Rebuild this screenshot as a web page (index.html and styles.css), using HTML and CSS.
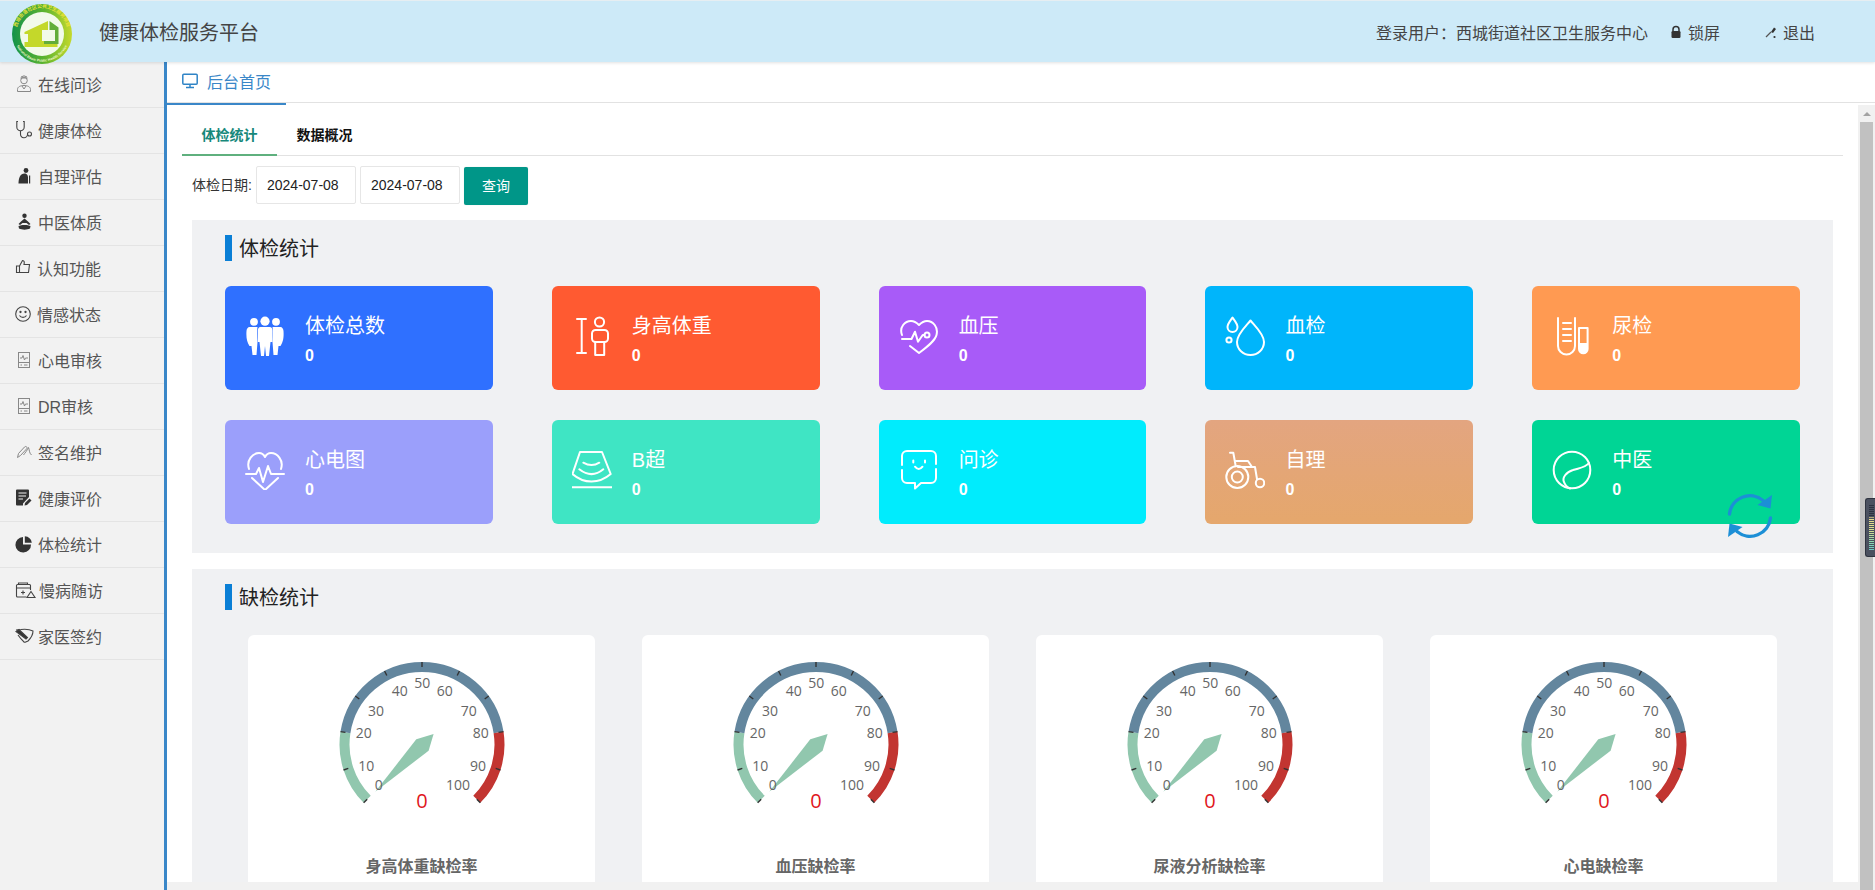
FILE: index.html
```html
<!DOCTYPE html>
<html lang="zh-CN">
<head>
<meta charset="utf-8">
<title>健康体检服务平台</title>
<link rel="stylesheet" href="styles.css">
</head>
<body>
<svg class="defs" width="0" height="0" aria-hidden="true">
  <defs>
    <linearGradient id="ring" x1="0" y1="0" x2="1" y2="0">
      <stop offset="0" stop-color="#12924a"/><stop offset=".55" stop-color="#5fb52e"/><stop offset="1" stop-color="#c5d92c"/>
    </linearGradient>
    <symbol id="dial" viewBox="0 0 240 200">
      <g fill="none" stroke-width="10">
        <path d="M65.2 154.3A77.5 77.5 0 0 1 43.45 87.38" stroke="#91c7ae"/>
        <path d="M43.45 87.38A77.5 77.5 0 0 1 196.55 87.38" stroke="#63869e"/>
        <path d="M196.55 87.38A77.5 77.5 0 0 1 174.8 154.3" stroke="#c23531"/>
      </g>
      <g stroke="#333" stroke-width="1.4">
        <line x1="120" y1="17" x2="120" y2="22" transform="rotate(-135 120 99.5)"/>
        <line x1="120" y1="17" x2="120" y2="22" transform="rotate(-108 120 99.5)"/>
        <line x1="120" y1="17" x2="120" y2="22" transform="rotate(-81 120 99.5)"/>
        <line x1="120" y1="17" x2="120" y2="22" transform="rotate(-54 120 99.5)"/>
        <line x1="120" y1="17" x2="120" y2="22" transform="rotate(-27 120 99.5)"/>
        <line x1="120" y1="17" x2="120" y2="22"/>
        <line x1="120" y1="17" x2="120" y2="22" transform="rotate(27 120 99.5)"/>
        <line x1="120" y1="17" x2="120" y2="22" transform="rotate(54 120 99.5)"/>
        <line x1="120" y1="17" x2="120" y2="22" transform="rotate(81 120 99.5)"/>
        <line x1="120" y1="17" x2="120" y2="22" transform="rotate(108 120 99.5)"/>
        <line x1="120" y1="17" x2="120" y2="22" transform="rotate(135 120 99.5)"/>
      </g>
      <polygon points="73.3,146.7 114.3,94.3 131.6,89 126.6,105.7" fill="#91c7ae"/>
    </symbol>
  </defs>
</svg>

<div class="app">
  <header class="topbar">
    <div class="brand">
      <svg class="logo" width="62" height="62" viewBox="0 0 62 62">
        <defs><path id="logo-top" d="M5.4 26.5A26 26 0 0 1 56.6 26.5"/><path id="logo-bot" d="M3.5 36A28 28 0 0 0 58.5 36"/></defs>
        <circle cx="31" cy="31" r="30" fill="url(#ring)"/>
        <circle cx="31" cy="31" r="22" fill="#f2fae9"/>
        <path d="M13.5 29 L37 18 V27 H31 V38 H46.5 V44 H13.5 V39 H17 V31 H13.5Z" fill="#c4d82a"/>
        <path d="M38.5 18 L47.5 24.5 V41 H33 V38 H44 V27 H38.5Z" fill="#62ad3a"/>
        <text class="logo-top"><textPath href="#logo-top" startOffset="50%" text-anchor="middle">西城街道社区公共卫生服务项目</textPath></text>
        <text class="logo-bot"><textPath href="#logo-bot" startOffset="50%" text-anchor="middle">National Basic Public Health Service</textPath></text>
      </svg>
      <span class="brand-name">健康体检服务平台</span>
    </div>
    <div class="top-actions">
      <span class="user">登录用户：西城街道社区卫生服务中心</span>
      <span class="action action-lock">
        <svg width="12" height="14" viewBox="0 0 12 14"><path d="M3 6V4.5a3 3 0 0 1 6 0V6" fill="none" stroke="#333" stroke-width="1.5"/><rect x="1.5" y="6" width="9" height="7" rx="1.2" fill="#333"/></svg>
        锁屏
      </span>
      <span class="action action-exit">
        <svg width="14" height="14" viewBox="0 0 14 14"><path d="M2 12 L7 7" stroke="#555" stroke-width="1.2"/><path d="M7 7 L10 2.5 L12 4 L9 8Z" fill="#333"/><circle cx="10.5" cy="12" r="1.1" fill="#333"/></svg>
        退出
      </span>
    </div>
  </header>

  <div class="shell">
    <nav class="sidebar">
      <a class="nav-item"><svg class="nav-icon stroke-gray" viewBox="0 0 20 20"><circle cx="9" cy="6.5" r="3.3"/><path d="M5.5 4 H12.5 M6 3 L9 1.8 L12 3"/><path d="M2.5 17.5 V15.5 C2.5 12.5 6 11.5 9 11.5 S15.5 12.5 15.5 15.5 V17.5Z"/><path d="M7 12 L9 15 L11 12"/></svg><span>在线问诊</span></a>
      <a class="nav-item"><svg class="nav-icon stroke-dark" viewBox="0 0 20 20"><path d="M3 1.5 H1.8 V7 A3.7 3.7 0 0 0 9.2 7 V1.5 H8"/><path d="M5.5 11 V14 A3.5 3.5 0 0 0 12.5 14.5"/><circle cx="14.5" cy="14" r="2"/></svg><span>健康体检</span></a>
      <a class="nav-item"><svg class="nav-icon fill-dark" viewBox="0 0 20 20"><circle cx="11" cy="4.5" r="2.4"/><path d="M3.5 17.5 C3.5 11.5 5.5 7.5 9.5 7.5 C12.5 7.5 13 10 13 12 V17.5Z"/><rect x="14" y="9.5" width="1.2" height="8"/></svg><span>自理评估</span></a>
      <a class="nav-item"><svg class="nav-icon fill-dark" viewBox="0 0 20 20"><circle cx="9.5" cy="3.8" r="2.2"/><path d="M9.5 6.5 L13 9.5 L15.5 12 L14 13 L11.5 11 H7.5 L5 13 L3.5 12 L6 9.5Z"/><path d="M3.5 14 C6 12.5 13 12.5 15.5 14 L15 16.5 C12 18 7 18 4 16.5Z"/></svg><span>中医体质</span></a>
      <a class="nav-item nav-tight"><svg class="nav-icon stroke-dark" viewBox="0 0 20 20"><path d="M1.5 8 H4.5 V14.5 H1.5Z"/><path d="M4.5 8 L7.5 2.5 C9.5 2.5 9.5 4.5 9 6.5 H14.5 L13.5 14.5 H4.5"/></svg><span>认知功能</span></a>
      <a class="nav-item nav-mid"><svg class="nav-icon stroke-dark" viewBox="0 0 20 20"><circle cx="8" cy="10" r="7.3"/><circle cx="5.5" cy="8" r=".6"/><circle cx="10.5" cy="8" r=".6"/><path d="M4.5 11.5 C6 14 10 14 11.5 11.5"/></svg><span>情感状态</span></a>
      <a class="nav-item"><svg class="nav-icon stroke-gray" viewBox="0 0 20 20"><rect x="3.5" y="2.5" width="11" height="15"/><path d="M3.5 12.5 H14.5 M5 8 H7 L8 5.5 L9.5 10 L10.5 8 H13 M5.5 15 H7 M9 15 H12.5"/></svg><span>心电审核</span></a>
      <a class="nav-item"><svg class="nav-icon stroke-gray" viewBox="0 0 20 20"><rect x="3.5" y="2.5" width="11" height="15"/><path d="M3.5 12.5 H14.5 M5 8 H7 L8 5.5 L9.5 10 L10.5 8 H13 M5.5 15 H7 M9 15 H12.5"/></svg><span>DR审核</span></a>
      <a class="nav-item"><svg class="nav-icon stroke-gray" viewBox="0 0 20 20"><path d="M2.5 15.5 L3.5 11.5 L9.5 5 C11 3.5 13 5.5 11.5 7 L5.5 13.5Z"/><path d="M8.5 13 C10 11 12.5 8 13.5 5.5 C14.5 7.5 14 11 16.5 13"/></svg><span>签名维护</span></a>
      <a class="nav-item"><svg class="nav-icon fill-dark" viewBox="0 0 20 20"><path d="M2 1.5 H13 A1 1 0 0 1 14 2.5 V9 L8 15.5 V17.5 H2 A1 1 0 0 1 1 16.5 V2.5 A1 1 0 0 1 2 1.5Z"/><path d="M3.5 5 H11.5 M3.5 8 H11 M3.5 11 H8" stroke="#f2f2f2" stroke-width="1.2"/><path d="M9.5 17.5 L10 15 L14.5 10.5 L16.5 12.5 L12 17Z"/></svg><span>健康评价</span></a>
      <a class="nav-item"><svg class="nav-icon fill-dark" viewBox="0 0 20 20"><path d="M8 3 V10.5 H16 A7.8 7.8 0 1 1 8 3Z"/><path d="M9.8 2.3 A7.8 7.8 0 0 1 16.8 8.8 H9.8Z"/></svg><span>体检统计</span></a>
      <a class="nav-item nav-wide"><svg class="nav-icon nav-icon-lg stroke-dark" viewBox="0 0 22 20"><path d="M11.5 17 H2.5 A1 1 0 0 1 1.5 16 V5.5 A1 1 0 0 1 2.5 4.5 H14.5 A1 1 0 0 1 15.5 5.5 V10"/><path d="M3.5 4.5 V3 H12.5 V4.5 M1.5 8 H15.5 M8 10.5 V14.5 M6 12.5 H10"/><path d="M16 11.5 L20 17.5 H12Z"/></svg><span>慢病随访</span></a>
      <a class="nav-item"><svg class="nav-icon stroke-dark" viewBox="0 0 20 20"><path d="M1 4 L6 3.5 C10 3 14 3 18 5 C18 9 16 12 13 15 L9.5 16.5"/><path d="M1 5.5 L11 13 L12.5 11.5 L4 3.5Z" fill="#333"/><path d="M3 9 C5 12 7 14 9.5 16.5"/></svg><span>家医签约</span></a>
    </nav>

    <main class="main">
      <div class="page-tabs">
        <div class="page-tab">
          <svg width="16" height="16" viewBox="0 0 16 16"><rect x=".8" y="1.3" width="14.4" height="10" rx="1" fill="none" stroke="#2f84c6" stroke-width="1.5"/><path d="M4 14.5 H12 M8 11.5 V14.5" stroke="#2f84c6" stroke-width="1.5"/></svg>
          <span>后台首页</span>
        </div>
      </div>
      <div class="viewport">
        <div class="content-col">
          <div class="scroll">
            <div class="sub-tabs">
              <div class="sub-tab is-active">体检统计</div>
              <div class="sub-tab">数据概况</div>
            </div>
            <form class="filter">
              <label class="filter-label">体检日期:</label>
              <div class="date-input">2024-07-08</div>
              <div class="date-input">2024-07-08</div>
              <button class="btn" type="button">查询</button>
            </form>

            <section class="panel panel-stats">
              <h2 class="panel-title">体检统计</h2>
              <div class="cards">
                <div class="card c-blue">
                  <svg class="card-icon" viewBox="0 0 40 40"><g fill="#fff"><circle cx="9" cy="5.8" r="3.9"/><circle cx="20" cy="5.2" r="4.6"/><circle cx="31" cy="5.8" r="3.9"/><path d="M4.5 11 H12.5 C12 14 12 20 12.5 26 L11.5 39 H7.5 L6.5 30 H4.5 C2 26 1 22 1.5 15 C1.5 13 3 11 4.5 11Z"/><path d="M15.5 11 H24.5 C27 11 27.5 13 27.5 15 V26 H25.5 L24 40 H21 L20 30 L19 40 H16 L14.5 26 H12.8 V15 C12.8 13 13.5 11 15.5 11Z"/><path d="M27.5 11 H35.5 C37 11 38.5 13 38.5 15 C39 22 38 26 35.5 30 H33.5 L32.5 39 H28.5 L27.5 26 C28 20 28 14 27.5 11Z"/></g></svg>
                  <div class="card-text"><div class="card-name">体检总数</div><div class="card-num">0</div></div>
                </div>
                <div class="card c-red">
                  <svg class="card-icon" viewBox="0 0 40 40"><path d="M5 3 H14 M9.7 3 V37 M5 37 H14" class="ic"/><circle cx="27.5" cy="6" r="4.6" class="ic"/><rect x="20" y="14" width="16" height="12" rx="3.5" class="ic"/><path d="M23.2 26 V39 H32.2 V26" class="ic"/></svg>
                  <div class="card-text"><div class="card-name">身高体重</div><div class="card-num">0</div></div>
                </div>
                <div class="card c-purple">
                  <svg class="card-icon" viewBox="0 0 40 40"><path d="M3 19 C0 11 6 5 12 5 C16 5 18 7 20 9 C22 7 24 5 28 5 C34 5 39.5 11 37.5 19 C36 25 28 31 20 37 L11 30" class="ic"/><path d="M3 23 H12.5 L16 15.7 L19 25.7 L23.7 19 H25.5" class="ic"/><circle cx="28" cy="19" r="2.5" class="ic"/></svg>
                  <div class="card-text"><div class="card-name">血压</div><div class="card-num">0</div></div>
                </div>
                <div class="card c-sky">
                  <svg class="card-icon" viewBox="0 0 40 40"><path d="M25.5 4.5 C21 10 12 18 12 26 A13.5 13 0 0 0 39 26 C39 18 30 10 25.5 4.5Z" class="ic"/><path d="M7.5 1.5 C5.5 4.5 2.5 7.5 2.5 11 A5 5 0 0 0 12.5 11 C12.5 7.5 9.5 4.5 7.5 1.5Z" class="ic"/><circle cx="4" cy="24" r="2.6" class="ic"/></svg>
                  <div class="card-text"><div class="card-name">血检</div><div class="card-num">0</div></div>
                </div>
                <div class="card c-orange">
                  <svg class="card-icon" viewBox="0 0 40 40"><path d="M6 2 V30 A8.5 8.5 0 0 0 23 30 V2" class="ic"/><path d="M11 7 H19 M11 13 H19 M11 19 H19 M11 25 H19" class="ic"/><path d="M27 12 V33 A4.3 4.3 0 0 0 35.6 33 V12Z" class="ic"/><path d="M27 27 H35.6 V33 A4.3 4.3 0 0 1 27 33Z" fill="#fff"/></svg>
                  <div class="card-text"><div class="card-name">尿检</div><div class="card-num">0</div></div>
                </div>
                <div class="card c-violet">
                  <svg class="card-icon" viewBox="0 0 40 40"><path d="M4 19 C1 10 8 3 14 3 C17 3 19 5 20 7 C21 5 23 3 26 3 C32 3 39 10 36 19" class="ic"/><path d="M7 28 L20 40 L33 28" class="ic"/><path d="M1 24 H11 L14 18 L18 32 L23 16 L26 24 H39" class="ic"/></svg>
                  <div class="card-text"><div class="card-name">心电图</div><div class="card-num">0</div></div>
                </div>
                <div class="card c-teal">
                  <svg class="card-icon" viewBox="0 0 40 40"><path d="M8 2 H30 L38.7 24 C27 34 12 34 .5 24Z" class="ic"/><path d="M11.3 12.7 Q19.7 17.5 27.3 12.7 M7.3 19.3 Q19.7 29 31.3 19.3" class="ic"/><path d="M.3 37.3 H39.7" class="ic"/></svg>
                  <div class="card-text"><div class="card-name">B超</div><div class="card-num">0</div></div>
                </div>
                <div class="card c-cyan">
                  <svg class="card-icon" viewBox="0 0 40 40"><path d="M3 15 V6 A5 5 0 0 1 8 1 H32 A5 5 0 0 1 37 6 V14 M37 19 V28 A5 5 0 0 1 32 33 H22 L16 38.5 V33 H8 A5 5 0 0 1 3 28 V20" class="ic"/><path d="M14.3 10.5 V12.5 M26 10.5 V12.5" class="ic"/><path d="M16 16.7 Q19.7 21.5 23.5 16.7" class="ic"/></svg>
                  <div class="card-text"><div class="card-name">问诊</div><div class="card-num">0</div></div>
                </div>
                <div class="card c-sand">
                  <svg class="card-icon" viewBox="0 0 40 40"><circle cx="12.3" cy="27" r="11" class="ic"/><circle cx="12.3" cy="27" r="5.5" class="ic"/><circle cx="35" cy="33" r="4.2" class="ic"/><path d="M5 2.7 H8.3 L10.5 15" class="ic"/><path d="M10 11 H23 L27 17 H13" class="ic"/><path d="M27 17 H30 L32 29" class="ic"/></svg>
                  <div class="card-text"><div class="card-name">自理</div><div class="card-num">0</div></div>
                </div>
                <div class="card c-green">
                  <svg class="card-icon" viewBox="0 0 40 40"><circle cx="20" cy="20" r="18.3" class="ic"/><path d="M37 13 C33 18 27 18 21 20 C14 22 10 28 12 32 C13 35 15 37 18 38.5" class="ic"/></svg>
                  <div class="card-text"><div class="card-name">中医</div><div class="card-num">0</div></div>
                  <svg class="loader" width="48" height="48" viewBox="0 0 48 48"><g fill="none" stroke="#1c8fd6" stroke-width="3.4" stroke-linecap="round"><path d="M3.5 22 A20.5 20.5 0 0 1 37 8.5"/><path d="M44.5 26 A20.5 20.5 0 0 1 11 39.5"/></g><path d="M46 3 L44.5 16.5 L31.5 13Z" fill="#1c8fd6"/><path d="M2 45 L3.5 31.5 L16.5 35Z" fill="#1c8fd6"/></svg>
                </div>
              </div>
            </section>

            <section class="panel panel-gauges">
              <h2 class="panel-title">缺检统计</h2>
              <div class="gauges">
                <div class="gauge">
                  <svg class="gauge-svg" viewBox="0 0 240 200"><use href="#dial"/><g class="tick-labels"><text x="76.7" y="139">0</text><text x="64.3" y="120">10</text><text x="61.7" y="87.7">20</text><text x="74" y="65.7">30</text><text x="97.7" y="45.7">40</text><text x="120.3" y="37.7">50</text><text x="142.7" y="45.7">60</text><text x="166.7" y="65.7">70</text><text x="178.7" y="87.7">80</text><text x="176" y="120">90</text><text x="156" y="139">100</text></g><text class="gauge-value" x="120" y="155.7">0</text></svg>
                  <div class="gauge-name">身高体重缺检率</div>
                </div>
                <div class="gauge">
                  <svg class="gauge-svg" viewBox="0 0 240 200"><use href="#dial"/><g class="tick-labels"><text x="76.7" y="139">0</text><text x="64.3" y="120">10</text><text x="61.7" y="87.7">20</text><text x="74" y="65.7">30</text><text x="97.7" y="45.7">40</text><text x="120.3" y="37.7">50</text><text x="142.7" y="45.7">60</text><text x="166.7" y="65.7">70</text><text x="178.7" y="87.7">80</text><text x="176" y="120">90</text><text x="156" y="139">100</text></g><text class="gauge-value" x="120" y="155.7">0</text></svg>
                  <div class="gauge-name">血压缺检率</div>
                </div>
                <div class="gauge">
                  <svg class="gauge-svg" viewBox="0 0 240 200"><use href="#dial"/><g class="tick-labels"><text x="76.7" y="139">0</text><text x="64.3" y="120">10</text><text x="61.7" y="87.7">20</text><text x="74" y="65.7">30</text><text x="97.7" y="45.7">40</text><text x="120.3" y="37.7">50</text><text x="142.7" y="45.7">60</text><text x="166.7" y="65.7">70</text><text x="178.7" y="87.7">80</text><text x="176" y="120">90</text><text x="156" y="139">100</text></g><text class="gauge-value" x="120" y="155.7">0</text></svg>
                  <div class="gauge-name">尿液分析缺检率</div>
                </div>
                <div class="gauge">
                  <svg class="gauge-svg" viewBox="0 0 240 200"><use href="#dial"/><g class="tick-labels"><text x="76.7" y="139">0</text><text x="64.3" y="120">10</text><text x="61.7" y="87.7">20</text><text x="74" y="65.7">30</text><text x="97.7" y="45.7">40</text><text x="120.3" y="37.7">50</text><text x="142.7" y="45.7">60</text><text x="166.7" y="65.7">70</text><text x="178.7" y="87.7">80</text><text x="176" y="120">90</text><text x="156" y="139">100</text></g><text class="gauge-value" x="120" y="155.7">0</text></svg>
                  <div class="gauge-name">心电缺检率</div>
                </div>
              </div>
            </section>
          </div>
          <div class="h-strip"></div>
        </div>
        <div class="scrollbar">
          <div class="scroll-up"></div>
          <div class="scroll-thumb"></div>
        </div>
      </div>
    </main>
  </div>
  <div class="side-widget"><div class="side-widget-bars"></div></div>
</div>
</body>
</html>
```

FILE: styles.css
```css
* { box-sizing: border-box; }
html, body { margin: 0; height: 100%; overflow: hidden; background: #fff; }
body { font-family: "Liberation Sans", "Noto Sans CJK SC", sans-serif; color: #333; }
.defs { position: absolute; }
.app { height: 890px; display: flex; flex-direction: column; position: relative; overflow: hidden; }

/* top bar */
.topbar { height: 62px; flex: none; background: #cdeaf8; border-top: 1px solid #e6eef2; display: flex; align-items: center; justify-content: space-between; box-shadow: 0 1px 3px rgba(0,0,0,.12); position: relative; z-index: 2; }
.brand { display: flex; align-items: center; }
.logo { margin: 5px 0 0 11px; overflow: visible; }
.logo-top { font-size: 4.8px; font-weight: 700; fill: #e8e23a; font-family: "Noto Sans CJK SC", sans-serif; }
.logo-bot { font-size: 3.6px; font-weight: 700; fill: #eef7c8; font-family: "Liberation Sans", sans-serif; }
.brand-name { margin-left: 26px; font-size: 20px; color: #444; }
.top-actions { display: flex; align-items: center; font-size: 16px; color: #444; padding-right: 60px; }
.action { display: flex; align-items: center; }
.action-lock { margin-left: 22px; gap: 6px; }
.action-exit { margin-left: 44px; gap: 5px; }

/* shell */
.shell { flex: 1; display: flex; min-height: 0; }
.sidebar { width: 167px; flex: none; background: #f2f2f2; border-right: 3px solid #3a87c8; }
.nav-item { height: 46px; display: flex; align-items: center; padding: 0 0 1px 15px; gap: 3px; font-size: 16px; color: #555; border-bottom: 1px solid #e4e4e4; }
.nav-tight { gap: 2px; }
.nav-mid { gap: 2px; }
.nav-wide { gap: 2px; }
.nav-icon { width: 20px; height: 20px; flex: none; }
.nav-icon-lg { width: 22px; }
.stroke-gray { fill: none; stroke: #888; stroke-width: 1; }
.stroke-dark { fill: none; stroke: #444; stroke-width: 1.1; }
.fill-dark { fill: #333; }

/* main */
.main { flex: 1; min-width: 0; display: flex; flex-direction: column; }
.page-tabs { height: 43px; flex: none; background: linear-gradient(#e2e2e2, #e2e2e2) 0 40px / 100% 1px no-repeat; }
.page-tab { width: 119px; height: 43px; padding: 0 0 4px 15px; display: flex; align-items: center; gap: 9px; font-size: 16px; color: #3a87c8; border-bottom: 2px solid #3a87c8; }
.viewport { flex: 1; display: flex; min-height: 0; }
.content-col { flex: 1; min-width: 0; display: flex; flex-direction: column; }
.scroll { flex: 1; min-height: 0; overflow: hidden; padding: 0 15px; }
.h-strip { height: 8px; flex: none; background: #f1f1f1; }
.scrollbar { width: 17px; flex: none; background: #f1f1f1; display: flex; flex-direction: column; align-items: center; padding-top: 7px; }
.scroll-up { width: 0; height: 0; border-left: 4px solid transparent; border-right: 4px solid transparent; border-bottom: 4px solid #a3a3a3; margin-bottom: 6px; }
.scroll-thumb { width: 13px; flex: 1; background: #c1c1c1; }
.side-widget { position: absolute; right: 0; top: 498px; width: 10px; height: 59px; background: #4b5160; border: 1px solid #2f3440; border-right: 0; border-radius: 3px 0 0 3px; padding: 6px 1px 5px 3px; }
.side-widget-bars { height: 100%; background: repeating-linear-gradient(to bottom, transparent 0, transparent 1px, rgba(75,81,96,1) 1px, rgba(75,81,96,1) 2px), linear-gradient(to bottom, #2d3240 0, #2d3240 25%, #e8d98a 28%, #d8df8f 55%, #8fd8b0 80%, #69c8c8 100%); }

/* sub tabs */
.sub-tabs { height: 51px; display: flex; border-bottom: 1px solid #e2e2e2; }
.sub-tab { width: 95px; height: 51px; padding-top: 10px; line-height: 40px; text-align: center; font-size: 14px; font-weight: 700; color: #111; }
.sub-tab.is-active { color: #16887a; border-bottom: 2px solid #5fb07e; }

/* filter */
.filter { display: flex; align-items: flex-start; margin: 10px 0 15px 10px; height: 39px; }
.filter-label { font-size: 14px; line-height: 38px; width: 64px; color: #333; white-space: nowrap; }
.date-input { width: 100px; height: 38px; line-height: 37px; margin-right: 4px; padding-left: 10px; font-size: 14px; color: #222; border: 1px solid #e6e6e6; border-radius: 2px; background: #fff; }
.btn { width: 64px; height: 38px; margin-top: 1px; padding: 0 0 2px; border: 0; border-radius: 2px; background: #009688; color: #fff; font: 14px "Liberation Sans", "Noto Sans CJK SC", sans-serif; box-shadow: 0 0 1px rgba(0,0,0,.2); }

/* panels */
.panel { margin: 0 10px; background: #f0f1f3; padding: 15px 33px 29px; }
.panel-gauges { margin-top: 16px; padding-bottom: 0; }
.panel-title { margin: 0 0 25px; height: 26px; border-left: 7px solid #0a7fd6; padding-left: 7px; font-size: 20px; line-height: 28px; font-weight: 400; color: #222; }
.cards { display: flex; flex-wrap: wrap; justify-content: space-between; row-gap: 30px; }
.card { width: 17%; height: 104px; border-radius: 6px; padding: 25px 0 0 20px; display: flex; align-items: flex-start; gap: 20px; color: #fff; position: relative; }
.card-icon { width: 40px; height: 40px; flex: none; margin-top: 5px; }
.ic { fill: none; stroke: #fff; stroke-width: 2; stroke-linecap: round; stroke-linejoin: round; }
.card-name { font-size: 20px; line-height: 30px; }
.card-num { font-size: 16px; line-height: 30px; font-weight: 700; }
.c-blue { background: #2f70ff; }
.c-red { background: #ff5a31; }
.c-purple { background: #a85bf8; }
.c-sky { background: #00b5fb; }
.c-orange { background: #ff9a52; }
.c-violet { background: #9b9ffb; }
.c-teal { background: #3fe5c4; }
.c-cyan { background: #00ecfd; }
.c-sand { background: linear-gradient(#e3a580, #e5a76c); }
.c-green { background: #00d595; }
.loader { position: absolute; left: 194px; top: 72px; }

/* gauges */
.gauges { display: flex; justify-content: center; gap: 47px; margin: 0 -33px; }
.gauge { width: 347px; height: 300px; flex: none; background: #fff; border-radius: 6px; padding-top: 10px; text-align: center; }
.gauge-svg { display: block; width: 240px; height: 200px; margin: 0 auto; }
.tick-labels text { font: 14px "Open Sans", sans-serif; fill: #666; text-anchor: middle; dominant-baseline: central; }
.gauge-value { font: 20px "Open Sans", sans-serif; fill: #e0161c; text-anchor: middle; dominant-baseline: central; }
.gauge-name { font-size: 16px; line-height: 43px; font-weight: 700; color: #666; }
```
